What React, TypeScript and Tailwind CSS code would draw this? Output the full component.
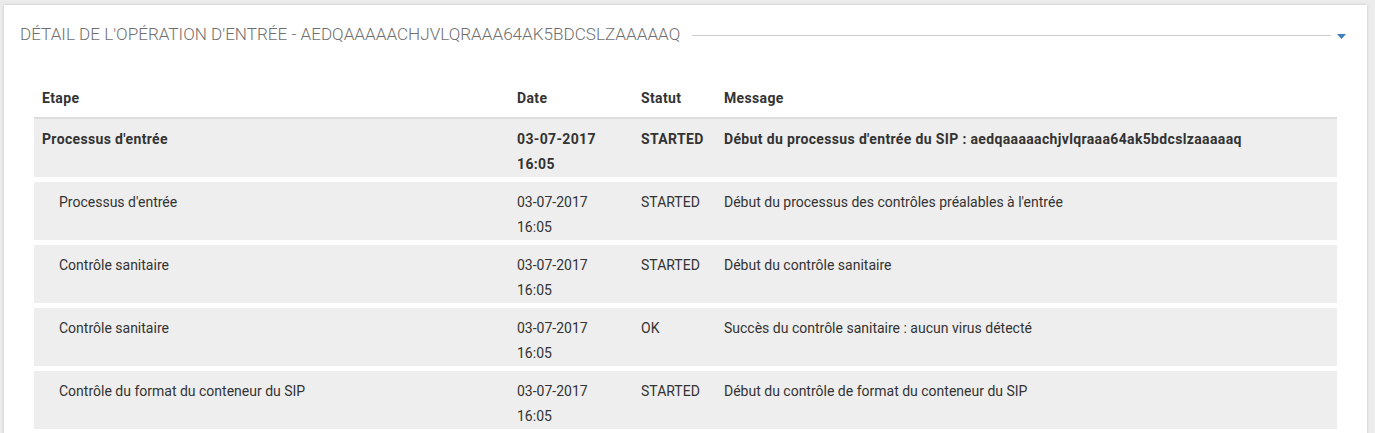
import React from "react";

type Row = { etape: string; date: string; time: string; statut: string; message: string; main?: boolean };

const rows: Row[] = [
  { etape: "Processus d'entrée", date: "03-07-2017", time: "16:05", statut: "STARTED", message: "Début du processus d'entrée du SIP : aedqaaaaachjvlqraaa64ak5bdcslzaaaaaq", main: true },
  { etape: "Processus d'entrée", date: "03-07-2017", time: "16:05", statut: "STARTED", message: "Début du processus des contrôles préalables à l'entrée" },
  { etape: "Contrôle sanitaire", date: "03-07-2017", time: "16:05", statut: "STARTED", message: "Début du contrôle sanitaire" },
  { etape: "Contrôle sanitaire", date: "03-07-2017", time: "16:05", statut: "OK", message: "Succès du contrôle sanitaire : aucun virus détecté" },
  { etape: "Contrôle du format du conteneur du SIP", date: "03-07-2017", time: "16:05", statut: "STARTED", message: "Début du contrôle de format du conteneur du SIP" },
];

export default function App() {
  return (
    <div
      className="w-[1375px] h-[433px] overflow-hidden bg-[#ececec] pt-[5px] pl-[4px] pr-[8px]"
      style={{ fontFamily: "Roboto, 'Noto Sans', sans-serif" }}
    >
      <div className="bg-white h-[440px] shadow-[0_0_3px_rgba(0,0,0,0.18)] px-[30px] pt-[20px]">
        <div className="flex items-center h-[20px] -ml-[14px] -mr-[9px]">
          <span className="text-[17.1px] font-light text-[#6f6f6f] whitespace-nowrap">
            DÉTAIL DE L'OPÉRATION D'ENTRÉE - AEDQAAAAACHJVLQRAAA64AK5BDCSLZAAAAAQ
          </span>
          <div className="flex-1 h-px bg-[#cccccc] ml-[12px] mr-[6px]" />
          <svg width="9" height="5" viewBox="0 0 9 5" className="mt-[3px]">
            <polygon points="0,0 9,0 4.5,5" fill="#3a7fc1" />
          </svg>
        </div>

        <div className="mt-[33px] text-[14px] text-[#333] leading-[25px]">
          <div className="grid grid-cols-[475px_124px_83px_1fr] border-b-2 border-[#dddddd] font-bold tracking-[0.35px] pb-[6px]">
            <div className="pl-2 pt-2">Etape</div>
            <div className="pl-2 pt-2">Date</div>
            <div className="pl-2 pt-2">Statut</div>
            <div className="pl-2 pt-2">Message</div>
          </div>
          {rows.map((r, i) => (
            <div
              key={i}
              className={`grid grid-cols-[475px_124px_83px_1fr] bg-[#eeeeee] h-[58px] mb-[5px] ${r.main ? "font-bold tracking-[0.35px]" : ""}`}
            >
              <div className={r.main ? "pl-2 pt-2" : "pl-[25px] pt-2"}>{r.etape}</div>
              <div className="pl-2 pt-2">
                <div>{r.date}</div>
                <div>{r.time}</div>
              </div>
              <div className="pl-2 pt-2">{r.statut}</div>
              <div className="pl-2 pt-2">{r.message}</div>
            </div>
          ))}
        </div>
      </div>
    </div>
  );
}
